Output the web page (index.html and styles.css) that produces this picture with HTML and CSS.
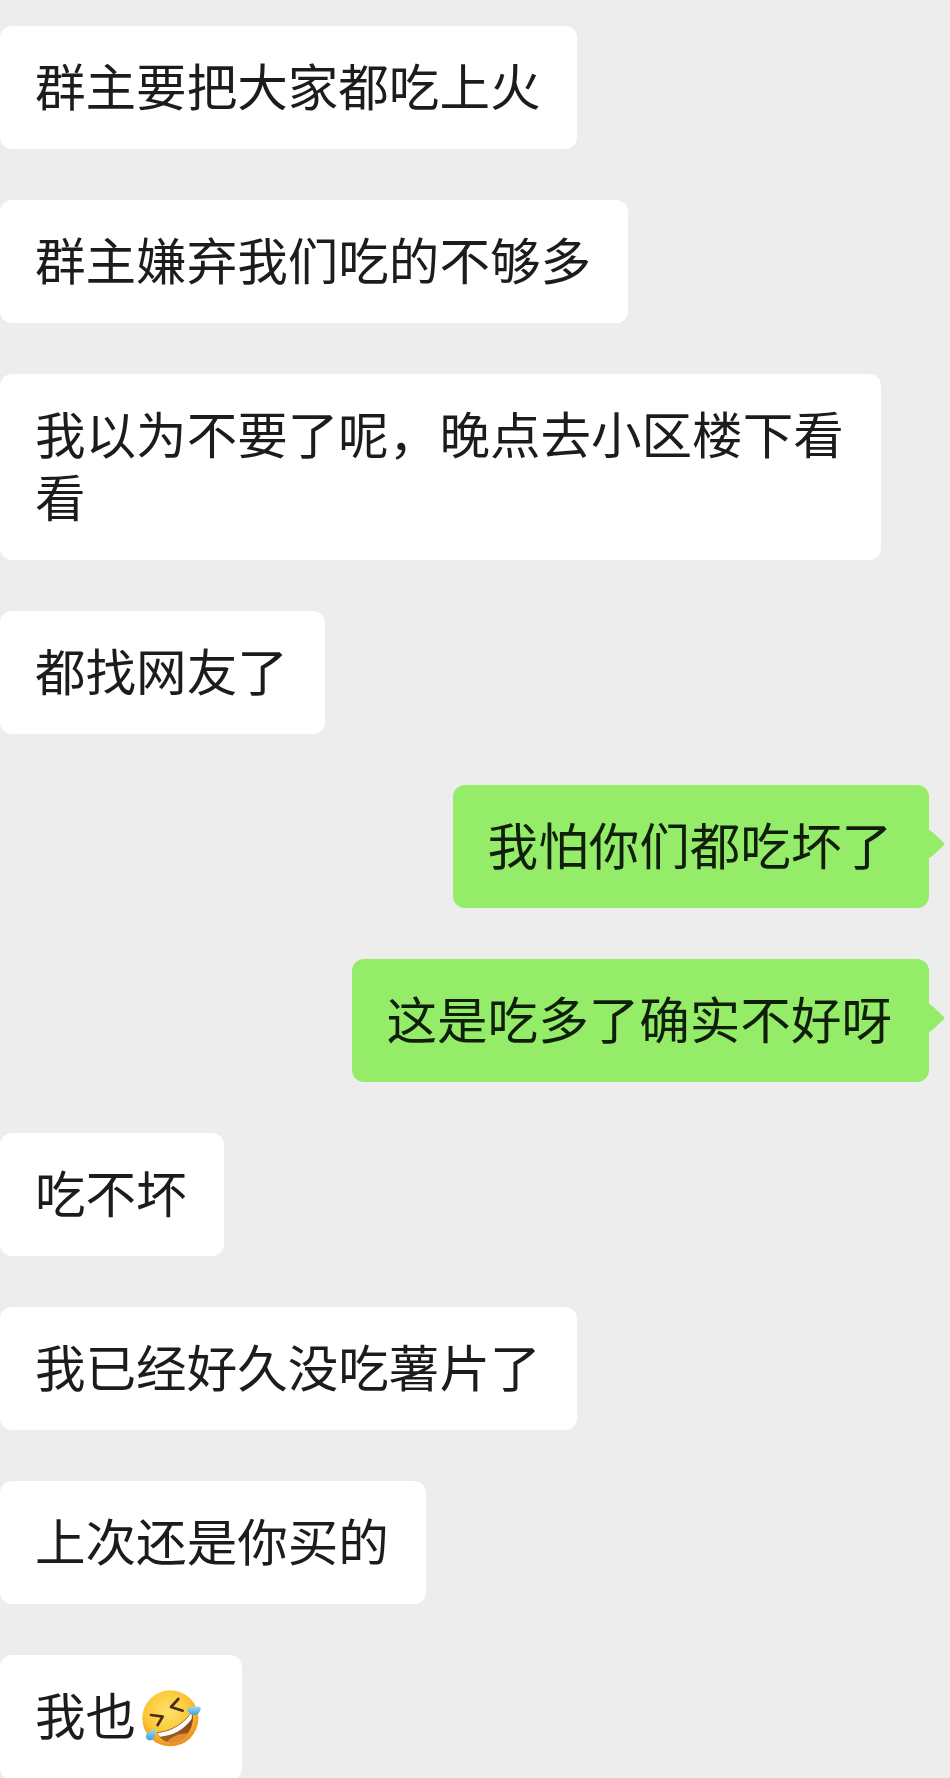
FILE: index.html
```html
<!DOCTYPE html>
<html lang="zh-CN">
<head>
<meta charset="utf-8">
<title>聊天记录</title>
<link rel="stylesheet" href="styles.css">
</head>
<body>
<main class="chat">
  <div class="msg in"><p class="bubble">群主要把大家都吃上火</p></div>
  <div class="msg in"><p class="bubble">群主嫌弃我们吃的不够多</p></div>
  <div class="msg in"><p class="bubble">我以为不要了呢，晚点去小区楼下看看</p></div>
  <div class="msg in"><p class="bubble">都找网友了</p></div>
  <div class="msg out"><p class="bubble">我怕你们都吃坏了</p></div>
  <div class="msg out"><p class="bubble">这是吃多了确实不好呀</p></div>
  <div class="msg in"><p class="bubble">吃不坏</p></div>
  <div class="msg in"><p class="bubble">我已经好久没吃薯片了</p></div>
  <div class="msg in"><p class="bubble">上次还是你买的</p></div>
  <div class="msg in"><p class="bubble">我也<svg class="emoji" viewBox="38 12 180 180" role="img" aria-label="🤣">
    <defs>
      <radialGradient id="face" cx="45%" cy="38%" r="62%">
        <stop offset="0" stop-color="#fde36a"/>
        <stop offset="0.68" stop-color="#fbc433"/>
        <stop offset="1" stop-color="#ec8f1e"/>
      </radialGradient>
      <linearGradient id="tear" x1="0" y1="0" x2="0" y2="1">
        <stop offset="0" stop-color="#9adcf6"/>
        <stop offset="1" stop-color="#3d9fdd"/>
      </linearGradient>
      <linearGradient id="mouth" x1="0" y1="0" x2="0" y2="1">
        <stop offset="0" stop-color="#6e3f16"/>
        <stop offset="1" stop-color="#a9601f"/>
      </linearGradient>
    </defs>
    <circle cx="123" cy="106" r="84" fill="url(#face)"/>
    <path d="M82 148 C125 145 165 120 188 85 C200 130 170 175 130 178 C105 180 90 165 82 148Z" fill="url(#mouth)"/>
    <path d="M84 150 C125 147 165 122 188 87 L187 108 C165 140 130 158 92 161Z" fill="#fff"/>
    <path d="M115 176 C125 160 155 150 175 152 C165 168 145 178 130 178 C124 178 119 177 115 176Z" fill="#e08a35"/>
    <path d="M147 48 L125 72 L160 83" fill="none" stroke="#4a2c12" stroke-width="8" stroke-linecap="round" stroke-linejoin="round"/>
    <path d="M65 96 L100 101 L85 126" fill="none" stroke="#4a2c12" stroke-width="8" stroke-linecap="round" stroke-linejoin="round"/>
    <path d="M172 78 C182 72 204 68 214 73 C216 84 206 96 194 96 C184 96 176 88 172 78Z" fill="url(#tear)"/>
    <path d="M79 139 C81 152 76 170 64 172 C54 173 48 166 50 156 C53 148 68 141 79 139Z" fill="url(#tear)"/>
  </svg></p></div>
</main>
</body>
</html>
```
FILE: styles.css
```css
* {
  box-sizing: border-box;
}

html,
body {
  margin: 0;
  background: #ededed;
}

body {
  width: 950px;
  height: 1778px;
  overflow: hidden;
  font-family: "Noto Sans CJK SC", "Noto Sans", sans-serif;
}

.chat {
  display: flex;
  flex-direction: column;
  gap: 51px;
  padding-top: 26px;
}

.msg {
  display: flex;
}

.msg.out {
  justify-content: flex-end;
  padding-right: 21px;
}

.bubble {
  position: relative;
  margin: 0;
  max-width: 881px;
  min-height: 123px;
  padding: 27px 37px 33px 35px;
  border-radius: 12px;
  background: #fff;
  color: #1c1c1c;
  font-size: 50.55px;
  line-height: 63px;
}

.msg.out .bubble {
  background: #95ec69;
  color: #0f1f0a;
}

.msg.out .bubble::after {
  content: "";
  position: absolute;
  top: 43px;
  right: -16px;
  width: 17px;
  height: 32px;
  background: #95ec69;
  clip-path: path("M0 0 C0 2 3.500 3 5 4.500 L15.500 14.500 Q17 16 15.500 17.500 L5 27.500 C3.500 29 0 30 0 32 Z");
}

.emoji {
  display: inline-block;
  width: 60px;
  height: 60px;
  margin: 0 3px 0 6px;
  vertical-align: -12px;
}
```
